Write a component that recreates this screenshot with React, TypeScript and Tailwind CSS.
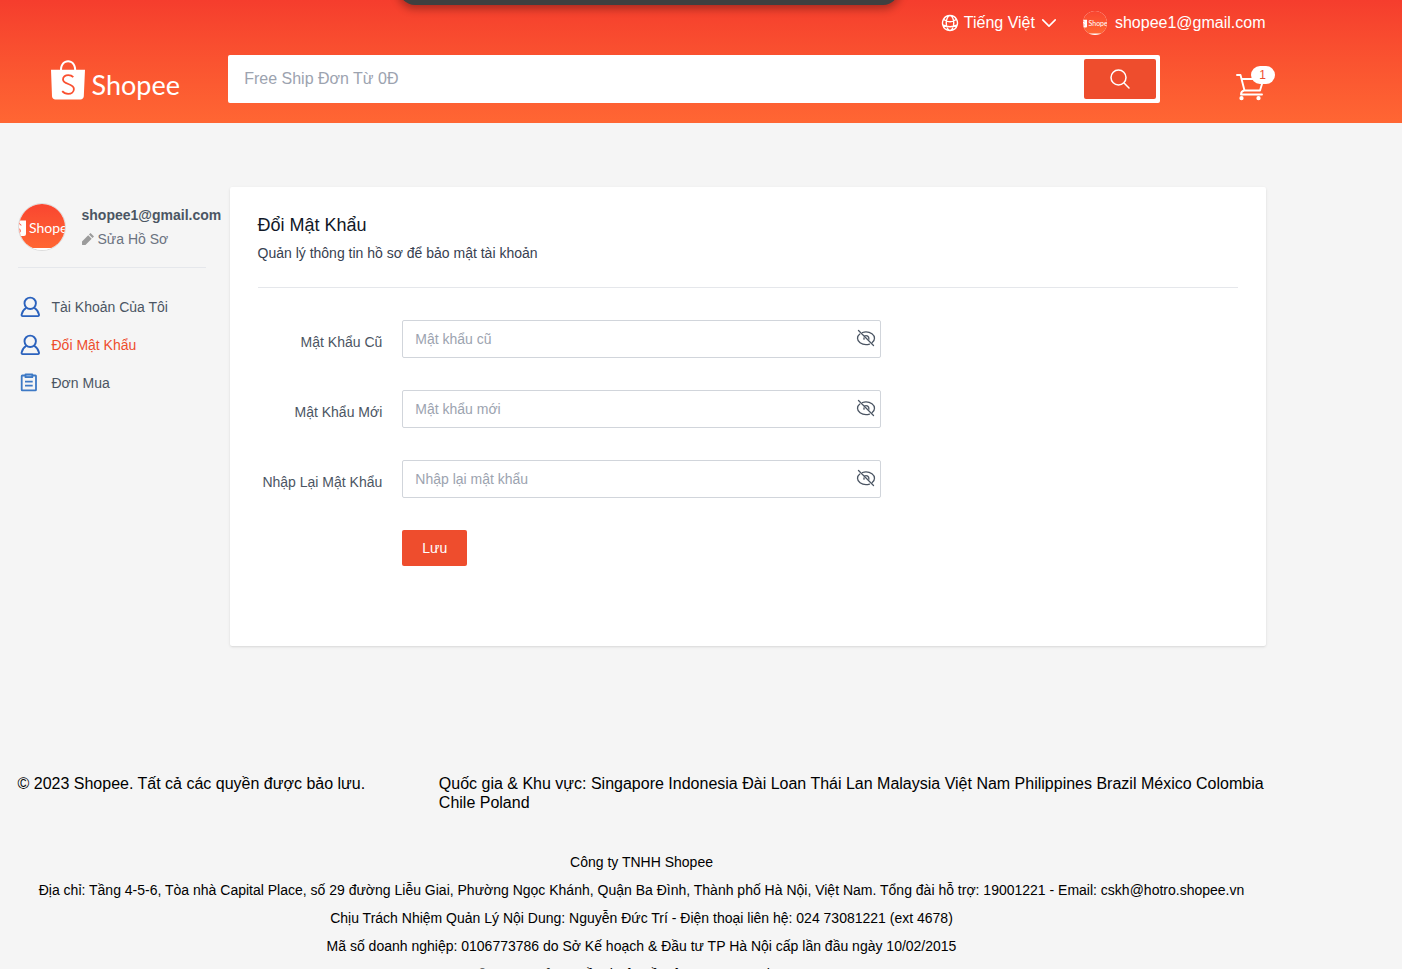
import type { ReactNode } from 'react'

function Bag({ className }: { className: string }) {
  return (
    <svg viewBox="0 0 34 40" className={className} aria-hidden="true">
      <path d="M0 9.7h9C9.200 4 12.600.3 17.100.3S25 4 25.200 9.700H34l-1.200 26.500c-.1 1.900-1.500 3.200-3.400 3.200h-25c-1.900 0-3.300-1.300-3.400-3.200zM11 9.700h12.200C23 5 20.500 2.300 17.100 2.300S11.200 5 11 9.700z" fill="white" />
      <path d="M22.300 17.200c-1.200-1.300-3-2-5-2-3 0-5.300 1.600-5.300 4.200 0 5.400 10.900 3.800 10.900 9.500 0 3-2.500 4.900-5.700 4.900-2.500 0-4.600-1-6-2.700" fill="none" stroke="#fa5030" strokeWidth="1.800" />
    </svg>
  )
}

function Avatar({ large = false }: { large?: boolean }) {
  return (
    <svg viewBox="0 0 48 48" className={large ? 'size-12 shrink-0' : 'size-6 shrink-0'} role="img" aria-label="Shopee">
      <defs>
        <linearGradient id={large ? 'avatar-large' : 'avatar-small'} x1="0" y1="0" x2="0" y2="1">
          <stop stopColor="#f94530" />
          <stop offset="1" stopColor="#ff6633" />
        </linearGradient>
        <clipPath id={large ? 'clip-large' : 'clip-small'}>
          <circle cx="24" cy="24" r={large ? 23 : 24} />
        </clipPath>
      </defs>
      {large && <circle cx="24" cy="24" r="23.500" fill="white" stroke="#dcdcdc" />}
      <g clipPath={large ? 'url(#clip-large)' : 'url(#clip-small)'}>
        <rect width="48" height="48" fill="white" />
        <rect width="48" height="45" fill={large ? 'url(#avatar-large)' : 'url(#avatar-small)'} />
        <path d="M0 17.500h8V31q0 2-2 2H0z" fill="white" />
        <path d="M0 20.500c2 0 3 1 3 2M0 25c3 1 3 5 0 5.500" stroke="#f94530" fill="none" />
        <text x="11" y="30" fill="white" fontFamily="Lato, sans-serif" fontSize="14">Shopee</text>
      </g>
    </svg>
  )
}

function Header() {
  return (
    <header className="bg-linear-to-b from-[#f53d2d] to-[#ff6633] pt-[11px] pb-5 text-white">
      <div className="max-w-[1283px]">
        <div className="mx-auto max-w-7xl px-4">
          <nav className="flex h-6 items-center justify-end">
            <button type="button" className="flex items-center">
              <svg className="size-5" viewBox="0 0 24 24" fill="none" stroke="currentColor" strokeWidth="1.700" aria-hidden="true">
                <path strokeLinecap="round" strokeLinejoin="round" d="M12 21a9.004 9.004 0 008.716-6.747M12 21a9.004 9.004 0 01-8.716-6.747M12 21c2.485 0 4.500-4.030 4.500-9S14.485 3 12 3m0 18c-2.485 0-4.500-4.030-4.500-9S9.515 3 12 3m0 0a8.997 8.997 0 017.843 4.582M12 3a8.997 8.997 0 00-7.843 4.582m15.686 0A11.953 11.953 0 0112 10.500c-2.998 0-5.740-1.100-7.843-2.918m15.686 0A8.959 8.959 0 0121 12c0 .778-.099 1.533-.284 2.253m0 0A17.919 17.919 0 0112 16.500c-3.162 0-6.133-.815-8.716-2.247m0 0A9.015 9.015 0 013 12c0-1.605.420-3.113 1.157-4.418" />
              </svg>
              <span className="mx-1">Tiếng Việt</span>
              <svg className="size-5" viewBox="0 0 24 24" fill="none" stroke="currentColor" strokeWidth="1.900" aria-hidden="true">
                <path strokeLinecap="round" strokeLinejoin="round" d="M19.500 8.250l-7.500 7.500-7.500-7.500" />
              </svg>
            </button>
            <a href="#profile" className="ml-6 flex items-center gap-2">
              <Avatar />
              shopee1@gmail.com
            </a>
          </nav>
          <div className="mt-5 grid grid-cols-12 items-center gap-4">
            <a href="#home" className="col-span-2 flex items-center gap-[7px] pt-px pl-[33px]" aria-label="Shopee">
              <Bag className="h-10 w-[34px] shrink-0" />
              <span className="pt-2.5 font-['Lato',sans-serif] text-[27px] leading-8">Shopee</span>
            </a>
            <form className="col-span-9 flex rounded-xs bg-white p-1" onSubmit={(e) => e.preventDefault()}>
              <input aria-label="Tìm kiếm" placeholder="Free Ship Đơn Từ 0Đ" className="min-w-0 grow px-3 text-base text-black outline-none placeholder:text-[#9ca3af]" />
              <button type="submit" aria-label="Tìm kiếm" className="flex h-10 w-18 items-center justify-center rounded-xs bg-[#ee4d2d]">
                <svg className="size-6" viewBox="0 0 24 24" fill="none" stroke="currentColor" strokeWidth="1.500" aria-hidden="true">
                  <path strokeLinecap="round" strokeLinejoin="round" d="M21 21l-5.197-5.197m0 0A7.500 7.500 0 105.196 5.196a7.500 7.500 0 0010.607 10.607z" />
                </svg>
              </button>
            </form>
            <a href="#cart" aria-label="Giỏ hàng" className="relative mt-4 justify-self-end">
              <svg className="size-8" viewBox="0 0 32 32" fill="none" stroke="white" strokeWidth="1.900" strokeLinecap="round" strokeLinejoin="round" aria-hidden="true">
                <path d="M3 4h3.500l4 15.500h15.500L29.500 8H7.500M10 19.500c-2.200.6-3 2-3 4h21" />
                <circle cx="7.500" cy="27.200" r="1.200" fill="white" />
                <circle cx="24.500" cy="27.200" r="1.200" fill="white" />
              </svg>
              <span className="absolute -top-[5px] -right-[9px] flex h-[18px] w-6 items-center justify-center rounded-full bg-white text-xs text-[#ee4d2d]">1</span>
            </a>
          </div>
        </div>
      </div>
    </header>
  )
}

function UserIcon() {
  return (
    <svg viewBox="0 0 24 24" className="size-6" fill="none" stroke="#2b62bd" strokeWidth="1.900" strokeLinejoin="round" aria-hidden="true">
      <circle cx="12.200" cy="8.300" r="5.700" />
      <path d="M8.300 12.700c-2.500 1.600-4.200 4.200-4.700 6.900-.1 1 .3 1.500 1 1.500h15.400c.7 0 1.100-.5 1-1.500-.5-2.700-2.300-5.300-4.800-6.900" />
    </svg>
  )
}

function OrderIcon() {
  return (
    <svg viewBox="0 0 24 24" className="size-6" fill="none" stroke="#3d79c5" strokeWidth="1.800" strokeLinejoin="round" aria-hidden="true">
      <path d="M7 4.500H4.300q-.6 0-.6.600v13.700q0 .6.600.6h13.100q.6 0 .6-.6v-13.700q0-.6-.6-.6H15" />
      <path d="M7.500 3.400h6.800v2.800H7.500z" fill="#9dbbe2" />
      <path d="M7 10.700h7.700M7 14.700h7.700" />
    </svg>
  )
}

function MenuItem({ icon, label, active = false }: { icon: ReactNode; label: string; active?: boolean }) {
  return (
    <a href="#account" className={active ? 'flex h-6 items-center gap-[10px] text-[#ee4d2d]' : 'flex h-6 items-center gap-[10px] text-[#4b5563]'}>
      {icon}
      {label}
    </a>
  )
}

function Sidebar() {
  return (
    <aside className="col-span-2 text-sm">
      <div className="flex items-center border-b border-[#e5e7eb] py-4">
        <Avatar large />
        <div className="w-0 grow pl-4 whitespace-nowrap">
          <div className="font-semibold text-[#4b5563]">shopee1@gmail.com</div>
          <a href="#profile" className="mt-1 flex items-center gap-1 text-[#6b7280]">
            <svg viewBox="0 0 12 12" className="size-3" aria-hidden="true">
              <path d="M8.540 0L6.987 1.560l3.460 3.480L12 3.480M0 8.520l.073 3.428L3.460 12l6.210-6.180-3.460-3.480" fill="#9b9b9b" />
            </svg>
            Sửa Hồ Sơ
          </a>
        </div>
      </div>
      <nav className="mt-[27px] flex flex-col gap-[14px]">
        <MenuItem icon={<UserIcon />} label="Tài Khoản Của Tôi" />
        <MenuItem icon={<UserIcon />} label="Đổi Mật Khẩu" active />
        <MenuItem icon={<OrderIcon />} label="Đơn Mua" />
      </nav>
    </aside>
  )
}

const fields = [
  { id: 'password', label: 'Mật Khẩu Cũ', placeholder: 'Mật khẩu cũ' },
  { id: 'new-password', label: 'Mật Khẩu Mới', placeholder: 'Mật khẩu mới' },
  { id: 'confirm-password', label: 'Nhập Lại Mật Khẩu', placeholder: 'Nhập lại mật khẩu' },
]

function PasswordForm() {
  return (
    <main className="col-span-10 rounded-xs bg-white px-7 pb-20 shadow-sm">
      <div className="border-b border-[#e5e7eb] py-6">
        <h1 className="text-lg leading-7 text-[#111827]">Đổi Mật Khẩu</h1>
        <p className="mt-1 text-sm text-[#374151]">Quản lý thông tin hồ sơ để bảo mật tài khoản</p>
      </div>
      <form className="mt-8 flex max-w-[624px] flex-col gap-8 text-sm" onSubmit={(e) => e.preventDefault()}>
        {fields.map((field) => (
          <div key={field.id} className="flex items-start">
            <label htmlFor={field.id} className="w-1/5 shrink-0 pt-3 text-right whitespace-nowrap text-[#4b5563]">{field.label}</label>
            <div className="w-4/5 pl-5">
              <div className="flex h-[38px] items-center rounded-xs border border-[#d1d5db] pr-1">
                <input id={field.id} type="password" placeholder={field.placeholder} className="min-w-0 grow px-3 outline-none placeholder:text-[#9ca3af]" />
                <button type="button" aria-label="Hiện mật khẩu" className="text-[#4b5563]">
                  <svg viewBox="0 0 20 20" className="size-5" fill="none" stroke="currentColor" strokeWidth="1.300" strokeLinecap="round" aria-hidden="true">
                    <path d="M2.500 1.500l15 15" />
                    <path d="M6.500 3.500C7.600 3.100 8.800 2.900 10 2.900c4.500 0 8.500 3 8.500 6.400 0 1.700-.9 3.200-2.300 4.300M3.800 5.100C2.400 6.200 1.500 7.700 1.500 9.300c0 3.400 4 6.400 8.500 6.400 1.200 0 2.400-.2 3.500-.6" />
                    <path d="M8.500 7c2.300-1.200 4.700.4 4.400 3.200M8 8.800v1.400" />
                  </svg>
                </button>
              </div>
            </div>
          </div>
        ))}
        <div className="flex">
          <div className="w-1/5 shrink-0" />
          <div className="w-4/5 pl-5">
            <button type="submit" className="h-9 rounded-xs bg-[#ee4d2d] px-5 text-white">Lưu</button>
          </div>
        </div>
      </form>
    </main>
  )
}

function Footer() {
  return (
    <footer className="mx-auto max-w-7xl px-4 py-16">
      <div className="grid grid-cols-3 gap-4 leading-[19px]">
        <div>© 2023 Shopee. Tất cả các quyền được bảo lưu.</div>
        <div className="col-span-2">Quốc gia &amp; Khu vực: Singapore Indonesia Đài Loan Thái Lan Malaysia Việt Nam Philippines Brazil México Colombia Chile Poland</div>
      </div>
      <div className="mt-10 flex flex-col gap-2 text-center text-sm">
        <p>Công ty TNHH Shopee</p>
        <p>Địa chỉ: Tầng 4-5-6, Tòa nhà Capital Place, số 29 đường Liễu Giai, Phường Ngọc Khánh, Quận Ba Đình, Thành phố Hà Nội, Việt Nam. Tổng đài hỗ trợ: 19001221 - Email: cskh@hotro.shopee.vn</p>
        <p>Chịu Trách Nhiệm Quản Lý Nội Dung: Nguyễn Đức Trí - Điện thoại liên hệ: 024 73081221 (ext 4678)</p>
        <p>Mã số doanh nghiệp: 0106773786 do Sở Kế hoạch &amp; Đầu tư TP Hà Nội cấp lần đầu ngày 10/02/2015</p>
        <p>© 2015 - Bản quyền thuộc về Công ty TNHH Shopee</p>
      </div>
    </footer>
  )
}

export default function App() {
  return (
    <div className="min-h-screen bg-[#f5f5f5] font-['Liberation_Sans',Arial,sans-serif] text-base text-black">
      <div className="fixed -top-11 left-[399px] h-[49px] w-[500px] rounded-2xl bg-[#404040] shadow-[0_3px_8px_1px_rgba(0,0,0,0.3)]" />
      <Header />
      <div className="max-w-[1283px]">
        <div className="mx-auto grid max-w-7xl grid-cols-12 gap-6 px-4 py-16">
          <Sidebar />
          <PasswordForm />
        </div>
        <Footer />
      </div>
    </div>
  )
}
